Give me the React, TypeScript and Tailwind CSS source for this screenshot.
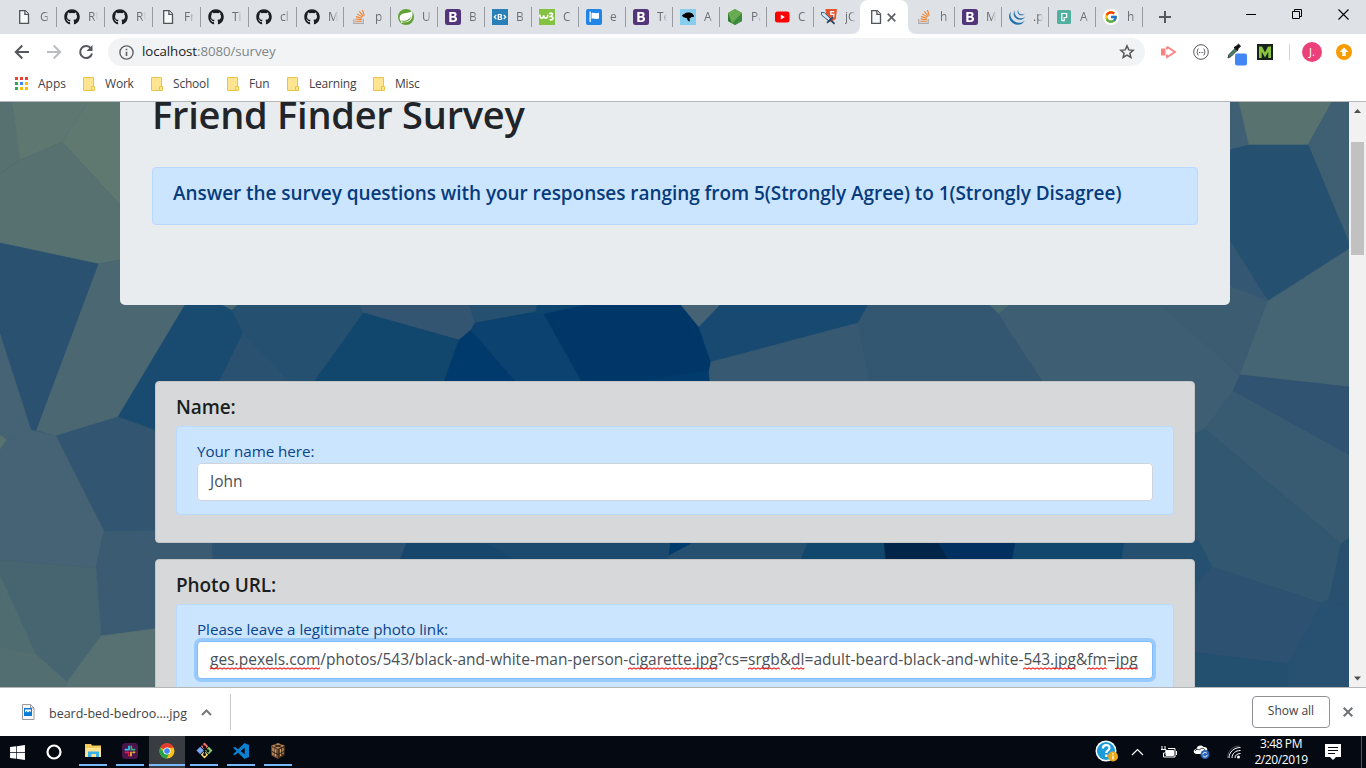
import React from "react";
import { FaGithub, FaWindows } from "react-icons/fa";
import { FcGoogle } from "react-icons/fc";
import { SiJquery } from "react-icons/si";

type Kind =
  | "page" | "github" | "stack" | "spring" | "boot" | "bb" | "w3" | "flag"
  | "duck" | "node" | "youtube" | "sword" | "jquery" | "p" | "google";

const TABS: { icon: Kind; label: string; w: string; active?: boolean }[] = [
  { icon: "page", label: "G", w: "w-12" },
  { icon: "github", label: "RU", w: "w-12" },
  { icon: "github", label: "RU", w: "w-12" },
  { icon: "page", label: "Fr", w: "w-12" },
  { icon: "github", label: "Ti", w: "w-12" },
  { icon: "github", label: "cl", w: "w-12" },
  { icon: "github", label: "M", w: "w-[47px]" },
  { icon: "stack", label: "p", w: "w-[47px]" },
  { icon: "spring", label: "U", w: "w-[47px]" },
  { icon: "boot", label: "B", w: "w-[47px]" },
  { icon: "bb", label: "B", w: "w-[47px]" },
  { icon: "w3", label: "C", w: "w-[47px]" },
  { icon: "flag", label: "e", w: "w-[47px]" },
  { icon: "boot", label: "Te", w: "w-[47px]" },
  { icon: "duck", label: "A", w: "w-[47px]" },
  { icon: "node", label: "Pa", w: "w-[47px]" },
  { icon: "youtube", label: "C", w: "w-[47px]" },
  { icon: "sword", label: "jQ", w: "w-[47px]" },
  { icon: "page", label: "", w: "w-12", active: true },
  { icon: "stack", label: "h", w: "w-[46px]" },
  { icon: "boot", label: "M", w: "w-[47px]" },
  { icon: "jquery", label: ".p", w: "w-[47px]" },
  { icon: "p", label: "A", w: "w-[47px]" },
  { icon: "google", label: "h", w: "w-[47px]" },
];

function Favicon({ kind }: { kind: Kind }) {
  const s = { width: 16, height: 16, viewBox: "0 0 16 16", className: "shrink-0" };
  switch (kind) {
    case "page":
      return (
        <svg {...s} fill="#f8f9fa" stroke="#505357" strokeWidth="1.3">
          <path d="M3.7 1.7h5.6l3.2 3.2v9.4H3.7z" />
          <path d="M8.9 1.7v3.6h3.6" />
        </svg>
      );
    case "github":
      return <FaGithub size={16} color="#1b1f23" className="shrink-0" />;
    case "stack":
      return (
        <svg {...s} fill="none">
          <path d="M2.8 10v4.3h9.4V10" stroke="#a9abae" strokeWidth="1.2" />
          <path d="M4.4 12.2h6.2M4.5 10l6.2.6M5 7.6l6 1.7M6.2 4.9l5.4 3.2M8.3 2.4l4.1 4.9M11.4 1l1.9 5.600" stroke="#f2802b" strokeWidth="1.1" />
        </svg>
      );
    case "spring":
      return (
        <svg {...s}>
          <circle cx="8" cy="8" r="8" fill="#5fa134" />
          <path d="M14 1.800c-2.200 2.800-6.600 1.600-9.900 3.300C.6 7.100 1.300 11 3.300 12.800c4.200 1.500 13.200.3 10.700-11z" fill="#fff" />
          <path d="M2.500 11.800c4.800.3 8.500-.7 10.700-4.600-.8 4.600-5.100 6.400-9.400 5.400z" fill="#5fa134" />
          <circle cx="3.700" cy="13.200" r=".8" fill="#fff" />
        </svg>
      );
    case "boot":
      return (
        <svg {...s}>
          <rect width="16" height="16" rx="2.5" fill="#533579" />
          <path fillRule="evenodd" fill="#fff" d="M4.3 3h4.6c3.2 0 3.5 3.7 1.3 4.6 3 1 2.4 5.4-1.4 5.4H4.3zM6.500 4.800v2.100h1.900c1.5 0 1.5-2.100 0-2.100zM6.500 8.700v2.500h2c1.800 0 1.800-2.500 0-2.500z" />
        </svg>
      );
    case "bb":
      return (
        <svg {...s}>
          <rect width="16" height="16" fill="#2980b9" />
          <path d="M4.300 6L2.200 8l2.100 2M11.700 6l2.100 2-2.100 2" stroke="#fff" strokeWidth="1.100" fill="none" />
          <path fillRule="evenodd" fill="#fff" d="M5.700 5h2.800c2 0 2 2.300.8 2.900 1.700.6 1.200 3.100-.8 3.100H5.700zM7 6v1.400h1c1 0 1-1.400 0-1.400zM7 8.400V10h1.200c1.200 0 1.200-1.600 0-1.600z" />
        </svg>
      );
    case "w3":
      return (
        <svg {...s}>
          <rect width="16" height="16" fill="#83c341" />
          <path d="M.8 5.500c0 4.500 3.600 5 3.900.8.300 4.200 3.900 3.700 4.200-.5M10.300 5.200c.8-1.700 4.200-1.300 2.900.9L11.600 7.500c4 .1 2.800 4.400-1 3.100" stroke="#fff" strokeWidth="1.600" fill="none" />
        </svg>
      );
    case "flag":
      return (
        <svg {...s}>
          <rect width="16" height="16" rx="2" fill="#2185e8" />
          <path d="M3.500 2.500h1.300V13H3.500zM5.500 4c2.500-1 4 1 7.500-.2v5.800c-3 1.200-5-.8-7.500.2z" fill="#fff" />
        </svg>
      );
    case "duck":
      return (
        <svg {...s}>
          <rect width="16" height="16" fill="#87cdee" />
          <path d="M2 6.200l2.500-1.400c1-1.500 6-2 7.800-.3l1.700 2.200c.3 1.600-1.300 1.300-2.500 1.300-.3 1-1.700 1-2 1.700l.5 2.500C8 12.700 7.300 11 7 9.300L3 8z" fill="#000" />
        </svg>
      );
    case "node":
      return (
        <svg {...s}>
          <path d="M8 0l7 4v8l-7 4-7-4V4z" fill="#539e43" />
          <path d="M8 0l7 4-10 10.300L1 12V4z" fill="#69ab51" />
          <path d="M1 4l4 10.300L1 12z" fill="#347b35" />
          <path d="M15 4v8l-7 4-3-1.700z" fill="#3e8b3e" />
        </svg>
      );
    case "youtube":
      return (
        <svg {...s}>
          <rect x="1" y="2.600" width="14.500" height="10.800" rx="2.500" fill="#f00" />
          <path d="M6.800 5.500l4 2.500-4 2.500z" fill="#fff" />
        </svg>
      );
    case "sword":
      return (
        <svg {...s}>
          <path d="M4.500 0H16l-1.200 10-5 3-4.500-2.500z" fill="#e4552d" />
          <path d="M13.300 2.600H9.700l.2 2.700h3l-.3 2.700-2.800.5" stroke="#fff" fill="none" strokeWidth="1.200" />
          <path d="M0 3.500l3.500.2 6.700 6.700-1.500 2L1 6.500z" fill="#d5ecfa" stroke="#25557e" strokeWidth=".9" />
          <path d="M6 13.800l6-6M10.300 11.700l3.200 3.200" stroke="#23486d" strokeWidth="1.800" />
        </svg>
      );
    case "jquery":
      return <SiJquery size={16} color="#2272ae" className="shrink-0" />;
    case "p":
      return (
        <svg {...s}>
          <rect x="1" y="1" width="14" height="14" rx="1.500" fill="#50af9f" />
          <path d="M5.800 12V4.500h4.900v4H8.200v3.200H5.800" stroke="#fff" strokeWidth="1.200" fill="none" />
        </svg>
      );
    case "google":
      return (
        <span className="flex size-4 shrink-0 items-center justify-center rounded-full bg-white">
          <FcGoogle size={14} />
        </span>
      );
  }
}

function TabStrip() {
  return (
    <div className="flex h-[34px] shrink-0 bg-[#dee1e6] pl-2">
      {TABS.map((t, i) =>
        t.active ? (
          <div key={i} className="relative flex h-[34px] w-12 shrink-0 items-center rounded-t-lg bg-white pl-2">
            <svg className="absolute bottom-0 -left-2" width="8" height="8"><path d="M8 0v8H0A8 8 0 0 0 8 0z" fill="#fff" /></svg>
            <svg className="absolute -right-2 bottom-0" width="8" height="8"><path d="M0 0v8h8A8 8 0 0 1 0 0z" fill="#fff" /></svg>
            <Favicon kind={t.icon} />
            <svg width="9" height="9" className="ml-[3px]" stroke="#5f6368" strokeWidth="1.700"><path d="M.7.700l7.600 7.600M8.300.700L.7 8.300" /></svg>
          </div>
        ) : (
          <div key={i} className={`relative flex shrink-0 items-center pl-2 ${t.w}`}>
            {i > 0 && i !== 19 && <span className="absolute top-[7px] left-0 h-5 w-px bg-[#989ba0]" />}
            <Favicon kind={t.icon} />
            <span className="ml-2 w-2.5 overflow-hidden text-xs whitespace-nowrap text-[#6b6e74] [mask-image:linear-gradient(to_right,black_50%,transparent)]">
              {t.label}
            </span>
          </div>
        )
      )}
      <div className="relative flex w-[46px] items-center justify-center">
        <span className="absolute top-[7px] left-0 h-5 w-px bg-[#989ba0]" />
        <svg width="12" height="12" stroke="#55585c" strokeWidth="2"><path d="M6 0v12M0 6h12" /></svg>
      </div>
      <div className="ml-auto flex h-7 items-center">
        <div className="flex w-[46px] justify-center"><svg width="10" height="10" stroke="#000"><path d="M0 5.500h10" /></svg></div>
        <div className="flex w-[46px] justify-center"><svg width="10" height="10" fill="none" stroke="#000"><path d="M.5 2.500h7v7h-7zM2.500 2.500v-2h7v7h-2" /></svg></div>
        <div className="flex w-[46px] justify-center"><svg width="11" height="11" stroke="#000" strokeWidth="1.100"><path d="M.5.500l10 10M10.500.500l-10 10" /></svg></div>
      </div>
    </div>
  );
}

function Toolbar() {
  return (
    <div className="flex h-9 shrink-0 items-center bg-white">
      <svg className="ml-[14px]" width="16" height="16" fill="none" stroke="#54575b" strokeWidth="2"><path d="M15 8H2M8.300 1.500L1.800 8l6.500 6.500" /></svg>
      <svg className="ml-4" width="16" height="16" fill="none" stroke="#babcbe" strokeWidth="2"><path d="M1 8h13M7.700 1.500L14.200 8l-6.500 6.500" /></svg>
      <svg className="ml-4" width="16" height="16" fill="none" stroke="#54575b" strokeWidth="2"><path d="M13 4.500A6 6 0 1 0 14 9.500" /><path d="M14.500 1v6h-6z" fill="#54575b" stroke="none" /></svg>
      <div className="ml-[14px] flex h-7 w-[1037px] items-center rounded-full bg-[#f1f3f4] pr-[10px] pl-[11px]">
        <svg width="15" height="15" fill="none" stroke="#5f6368" strokeWidth="1.400"><circle cx="7.500" cy="7.500" r="6.600" /><path d="M7.500 6.700v4.300M7.500 3.700v1.600" strokeWidth="1.600" /></svg>
        <span className="ml-2 text-[13.3px] tracking-[-0.08px] text-[#80868b]"><span className="text-[#202124]">localhost</span>:8080/survey</span>
        <svg className="ml-auto" width="16" height="16" fill="none" stroke="#55585c" strokeWidth="1.500"><path d="M8 1.900l1.800 4 4.400.4-3.300 2.900 1 4.300L8 11.200l-3.900 2.300 1-4.300-3.300-2.900 4.400-.4z" /></svg>
      </div>
      <svg className="ml-4" width="16" height="14" fill="none" stroke="#fb8080" strokeWidth="1.800"><path d="M6 1.800L14 7l-8 5.200V9.500M6 1.800V4.500" /><path d="M0 3.500h4.500v7H0z" fill="#fb8080" stroke="none" /></svg>
      <svg className="ml-4" width="16" height="16" fill="none" stroke="#54575b"><circle cx="8" cy="8" r="7.300" /><path d="M5.500 4.800c-1.600 0-.3 2.700-1.800 3.200 1.500.5.200 3.200 1.800 3.200M10.500 4.800c1.600 0 .3 2.700 1.800 3.200-1.500.5-.2 3.200-1.800 3.200" /><path d="M6 8.500h1M7.700 8.500h.8M9.300 8.500h1" /></svg>
      <svg className="mt-1 ml-[17px]" width="22" height="23"><path d="M2 15l1-3.500 6-6 2 2-6 6z" fill="#498063" stroke="#35443c" /><path d="M8 4.500l2-1 2.500-2.300 2 1.800-2.300 2.600-.8 2z" fill="#111" stroke="#111" /><rect x="9" y="10.500" width="12" height="12" rx="2" fill="#4285f4" /></svg>
      <svg className="ml-[9px]" width="16" height="16"><rect width="16" height="16" fill="#17201a" /><path d="M2 14V2.500h3l3 6 3-6h3V14h-2.700V7.800L8 13.500 4.700 7.800V14z" fill="#8cc63f" /></svg>
      <span className="ml-4 h-4 w-px bg-[#d1d3d6]" />
      <span className="ml-3 flex size-5 items-center justify-center rounded-full bg-[#ec407a] text-[11px] text-white">J.</span>
      <svg className="ml-[14px]" width="16" height="16"><circle cx="8" cy="8" r="8" fill="#f79c00" /><path d="M8 3.500l4.300 4.500H9.700v4H6.300V8H3.700z" fill="#fff" /></svg>
    </div>
  );
}

const BOOKMARKS = [
  { label: "Work", w: "w-[68px]" },
  { label: "School", w: "w-[76px]" },
  { label: "Fun", w: "w-[60px]" },
  { label: "Learning", w: "w-[86px]" },
  { label: "Misc", w: "w-[60px]" },
];
const DOTS = ["#ea4335", "#ea4335", "#ea4335", "#34a853", "#4285f4", "#fbbc05", "#34a853", "#fbbc05", "#fbbc05"];

function Bookmarks() {
  return (
    <div className="flex h-8 shrink-0 items-center border-b border-[#b5b6b8] bg-white pb-1 pl-[15px] text-xs text-[#3f4246]">
      <div className="flex w-[68px] items-center">
        <svg width="13" height="13">{DOTS.map((c, i) => <rect key={i} x={(i % 3) * 5} y={Math.floor(i / 3) * 5} width="3" height="3" fill={c} />)}</svg>
        <span className="ml-2.5">Apps</span>
      </div>
      {BOOKMARKS.map((b) => (
        <div key={b.label} className={`flex items-center ${b.w}`}>
          <svg width="12" height="14"><path d="M.5.500h10v9h1v4H.5z" fill="#ffe591" stroke="#e8c546" /><path d="M8.500 13v-3.500h2" fill="none" stroke="#e8c546" /></svg>
          <span className="ml-2.5 tracking-[-0.2px]">{b.label}</span>
        </div>
      ))}
    </div>
  );
}

const SHARDS: [string, string][] = [
  ["#56716f", "0,102 12,102 20,160 0,174"],
  ["#5e7771", "12,102 88,102 62,142 20,160"],
  ["#5f7870", "88,102 125,102 125,210 62,142"],
  ["#577171", "0,174 20,160 62,142 125,210 125,259 98,264 0,243"],
  ["#4a6772", "98,264 125,259 125,300 190,300 118,417 56,436 36,430"],
  ["#2a5170", "0,243 98,264 36,430 31,430 0,334"],
  ["#456374", "0,334 31,430 7,440 0,435"],
  ["#57726f", "0,435 7,440 0,450"],
  ["#194a6f", "188,300 220,305 232,310 243,333 220,381 160,440 118,417"],
  ["#4a6772", "215,300 246,300 232,310"],
  ["#325671", "56,436 118,417 160,432 160,530 104,531"],
  ["#456374", "7,440 31,430 56,436 104,531 96,568 0,560 0,450"],
  ["#3b5b72", "104,531 216,530 218,562 160,628 101,636 96,568"],
  ["#466571", "0,560 96,568 101,636 67,682 36,654 0,575"],
  ["#4f6c71", "0,575 36,654 0,647"],
  ["#536e71", "0,647 36,654 67,682 67,687 0,687"],
  ["#577172", "67,682 101,636 160,628 160,687 67,687"],
  ["#25506f", "244,300 358,300 363.5,313 314,382 290,382 243,333 232,310"],
  ["#2a5170", "243,333 291,382 219,382"],
  ["#335571", "358,300 468,300 475,323 471,330 459,340 363.5,313"],
  ["#11466d", "363.5,313 459,340 444,382 314,382"],
  ["#25506f", "468,300 538,300 536,312 475,323"],
  ["#003a6c", "459,340 471,330 516,382 444,382"],
  ["#0c426f", "471,330 475,323 536,312 544,314 582,382 516,382"],
  ["#0e456e", "538,300 620,300 544,314 536,312"],
  ["#003769", "620,298 677,300 699,327 711,362 709,372 710,382 582,382 544,314"],
  ["#023c6c", "640,381 709,371 710,382"],
  ["#456374", "677,300 725,300 699,327"],
  ["#184a71", "725,300 871,300 858,323 711,362 699,327"],
  ["#375a72", "711,362 858,323 870,382 710,382 709,372"],
  ["#335671", "871,300 985,300 999,314 1010,332 1043,382 870,382 858,323"],
  ["#486a70", "985,300 1015,300 999,314"],
  ["#3e5f73", "1015,300 1155,300 1240,375 1233,391 1205,429 1190,436 1190,382 1043,382 1010,332 999,314"],
  ["#3f6074", "1225,102 1239,102 1249,145 1225,151"],
  ["#587270", "1239,102 1332,102 1308,145 1249,145"],
  ["#3f5f73", "1332,102 1349,102 1349,243 1308,145"],
  ["#265070", "1225,151 1249,145 1308,145 1349,243 1349,249 1268,301 1225,233"],
  ["#345873", "1225,233 1268,301 1225,284"],
  ["#3c5c72", "1155,300 1225,284 1268,301 1240,375"],
  ["#466574", "1268,301 1349,249 1349,387 1240,375"],
  ["#2f5371", "1240,375 1349,387 1349,455 1233,391"],
  ["#395b72", "1233,391 1349,455 1349,538 1341,544 1205,430"],
  ["#325771", "1190,436 1205,429 1341,544 1329,601 1322,603 1212,567 1190,520"],
  ["#29516f", "1349,538 1341,544 1329,600 1349,608"],
  ["#26506f", "1122,540 1198,540 1212,567 1190,592 1122,562"],
  ["#2d5271", "1190,592 1212,567 1322,603 1288,664 1190,652"],
  ["#245070", "1190,652 1288,664 1288,687 1190,687"],
  ["#285171", "1322,603 1329,600 1349,608 1349,687 1288,687 1288,664"],
  ["#2b5270", "212,540 408,540 399,562 213,562"],
  ["#17466d", "408,540 672,540 670,562 399,562"],
  ["#1b4a6e", "480,540 672,540 670,562 520,562"],
  ["#265070", "672,540 809,540 800,562 668,562"],
  ["#003b6d", "671,540 697,540 669,555"],
  ["#11466d", "809,540 884,540 886,562 800,562"],
  ["#002548", "884,540 937,540 950,562 886,562"],
  ["#003060", "937,540 1016,540 1012,562 950,562"],
  ["#11466d", "1016,540 1124,540 1121,562 1012,562"],
];

function Wavy({ id, children }: { id: string; children: React.ReactNode }) {
  return (
    <span className="relative inline-block">
      {children}
      <svg className="absolute bottom-[2px] left-0 w-full" height="3">
        <pattern id={id} width="4" height="3" patternUnits="userSpaceOnUse">
          <path d="M-1 2.800L2 .8l3 2" fill="none" stroke="#f01414" strokeWidth="1.100" />
        </pattern>
        <rect width="100%" height="3" fill={`url(#${id})`} />
      </svg>
    </span>
  );
}

function Field({ title, label, focused, children }: { title: string; label: string; focused?: boolean; children: React.ReactNode }) {
  return (
    <section className="h-[162px] rounded-[4px] border border-[#c3c5c7] bg-[#d6d8d9] px-5 pt-[13px]">
      <h5 className="text-[19px] leading-6 font-semibold tracking-[-0.1px] text-[#1b1e21]">{title}</h5>
      <div className="mt-[7px] h-[89px] rounded-[4px] border border-[#b8daff] bg-[#cce5ff] px-5 pt-3">
        <label className="block h-6 text-[15.2px] leading-6 tracking-[-0.03px] text-[#0a4389]">{label}</label>
        <div className={`flex h-[38px] items-center rounded-[4px] border bg-white px-3 text-[15.5px] whitespace-nowrap text-[#495057] ${focused ? "border-[#80bdff] ring-[3px] ring-[#99caff]" : "border-[#ced4da]"}`}>
          {children}
        </div>
      </div>
    </section>
  );
}

function Page() {
  return (
    <main className="flex h-[585px] shrink-0 overflow-hidden">
      <div className="relative w-[1349px] overflow-hidden">
        <svg className="absolute inset-0" width="1349" height="585" viewBox="0 102 1349 585">
          <rect y="102" width="1349" height="585" fill="#2b5270" />
          {SHARDS.map(([fill, points], i) => <polygon key={i} points={points} fill={fill} stroke={fill} strokeWidth=".6" />)}
        </svg>
        <div className="relative ml-[120px] w-[1110px]">
          <header className="flow-root h-[203px] rounded-b-[5px] bg-[#e9ecef] px-8">
            <h1 className="-mt-3 h-[77px] text-[38px] leading-[48px] font-semibold tracking-[-0.25px] text-[#212529]">Friend Finder Survey</h1>
            <div className="h-[58px] rounded-[4px] border border-[#b8daff] bg-[#cce5ff] px-5 pt-[13px]">
              <h5 className="text-[19px] leading-6 font-semibold tracking-[-0.055px] whitespace-nowrap text-[#063b7c]">Answer the survey questions with your responses ranging from 5(Strongly Agree) to 1(Strongly Disagree)</h5>
            </div>
          </header>
          <div className="mt-[76px] ml-[35px] flex w-[1040px] flex-col gap-4">
            <Field title="Name:" label="Your name here:"><span>John</span></Field>
            <Field title="Photo URL:" label="Please leave a legitimate photo link:" focused>
              <span className="tracking-[0.02px]">
                <Wavy id="w1">ges.pexels.com</Wavy>/photos/543/black-and-white-man-person-<Wavy id="w2">cigarette.jpg</Wavy>?cs=<Wavy id="w3">srgb</Wavy>&amp;<Wavy id="w4">dl</Wavy>=adult-beard-black-and-white-<Wavy id="w5">543.jpg</Wavy>&amp;<Wavy id="w6">fm</Wavy>=<Wavy id="w7">jpg</Wavy>
              </span>
            </Field>
          </div>
        </div>
      </div>
      <div className="flex w-[17px] flex-col items-center bg-[#f1f1f1]">
        <svg width="17" height="17"><path d="M5 11h7L8.500 7z" fill="#505050" /></svg>
        <div className="mt-[23px] h-[113px] w-[13px] bg-[#c1c1c1]" />
        <svg className="mt-auto" width="17" height="17"><path d="M5 6.500h7l-3.500 4z" fill="#505050" /></svg>
      </div>
    </main>
  );
}

function Downloads() {
  return (
    <div className="flex h-[49px] shrink-0 items-center border-t border-[#b5b6b8] bg-white text-[#3f4246]">
      <svg className="ml-[22px]" width="13" height="16"><path d="M.5.500h8l3.500 3.500v11.500H.5z" fill="#f8f8f8" stroke="#9a9a9a" /><path d="M8.500.500v3.500H12" fill="none" stroke="#9a9a9a" /><path d="M2 4h8v8H2z" fill="#0b7bd8" /><path d="M3 8.500V5.500h6V8L7.500 7 6 8.500 4.500 7z" fill="#fff" /></svg>
      <span className="mt-[5px] ml-[14px] w-[152px] text-[12.5px] whitespace-nowrap">beard-bed-bedroo....jpg</span>
      <svg width="11" height="7" fill="none" stroke="#777" strokeWidth="2"><path d="M1 6l4.500-4.500L10 6" /></svg>
      <span className="ml-[18px] h-9 w-px bg-[#c8c9ca]" />
      <button className="ml-auto h-8 w-[78px] rounded-[4px] border border-[#8f9194] pb-[2px] text-xs">Show all</button>
      <svg className="mr-[13px] ml-[13px]" width="10" height="10" stroke="#6f7275" strokeWidth="2"><path d="M.7.700l8.600 8.600M9.300.700L.7 9.300" /></svg>
    </div>
  );
}

function Explorer() {
  return <svg width="17" height="16"><path d="M0 1h6l1 1.500h9V14H0z" fill="#f6cc59" /><path d="M1 5h15v9H0z" fill="#ffe391" /><path d="M3 14V8.500h11V14h-3v-3H6.500v3z" fill="#38b3ea" /></svg>;
}
function Slack() {
  return (
    <svg width="16" height="16" fill="none" strokeWidth="1.800" strokeLinecap="round"><rect width="16" height="16" rx="3.500" fill="#4a154b" /><path d="M7 3.500v3.200M3.500 6.700h1.800" stroke="#36c5f0" /><path d="M9.300 6.700h3.200M9.300 3.500v1.600" stroke="#2eb67d" /><path d="M9 9.500v3M11.200 9.300h1.300" stroke="#ecb22e" /><path d="M3.500 9.300h3.200M6.700 11.500v1" stroke="#e01e5a" /></svg>
  );
}
function Chrome() {
  return (
    <svg width="16" height="16" viewBox="0 0 16 16"><circle cx="8" cy="8" r="7.500" fill="#fbc116" /><path d="M8 8L1.200 4.500A7.500 7.500 0 0 1 14.700 4.700H8z" fill="#e33b2e" /><path d="M1.200 4.500A7.500 7.500 0 0 0 7.500 15.500L11 9.500 8 8 5 9.500z" fill="#2ba24c" /><circle cx="8" cy="8" r="3.600" fill="#fff" /><circle cx="8" cy="8" r="2.800" fill="#4285f4" /></svg>
  );
}
function Git() {
  return (
    <svg width="17" height="17" viewBox="0 0 17 17"><path d="M8.500.500l3.700 3.700-3.700 3.700-3.700-3.700z" fill="#f2706b" /><path d="M4.200 4.800l3.700 3.700-3.700 3.700L.5 8.500z" fill="#79a9f5" /><path d="M12.800 4.800l3.700 3.700-3.700 3.700-3.700-3.700z" fill="#84cf75" /><path d="M8.500 9.100l3.700 3.700-3.700 3.700-3.700-3.700z" fill="#f7d878" /><path d="M6 2l2.500 3v8M8.500 5l3.500 4" stroke="#111" strokeWidth="1.300" fill="none" /><circle cx="8.500" cy="5" r="1.500" fill="#111" /><circle cx="8.500" cy="12.500" r="1.500" fill="#111" /><circle cx="12" cy="9" r="1.400" fill="#111" /></svg>
  );
}
function Code() {
  return <svg width="16" height="16"><path fillRule="evenodd" d="M11.500 0L16 1.900v12.200L11.500 16 5 9.700 1.800 12.200 0 11.200 3.500 8 0 4.800l1.800-1L5 6.300zM11.700 4.800L7.500 8l4.200 3.200z" fill="#0b7fd0" /></svg>;
}
function Craft() {
  return (
    <svg width="16" height="16"><path d="M8 0l7 2.800L8 6 1 2.800z" fill="#b58655" /><path d="M1 2.800L8 6v10l-6.500-3.500z" fill="#745034" /><path d="M15 2.800L8 6v10l6.500-3.500z" fill="#49301f" /><path d="M3 5v7M5.500 6.500v7M10.500 6v7M13 5v6" stroke="#c99b68" strokeWidth="1.300" /><path d="M2 8.500l6 3 6-3M4.500 1.700l7 2.600M11.500 1.700l-7 2.600" stroke="#291c14" fill="none" /></svg>
  );
}

const APPS = [
  { icon: <Explorer />, box: "w-7" },
  { icon: <Slack />, box: "w-7 ml-[9px]" },
  { icon: <Chrome />, box: "w-9 ml-[5px] bg-[#393c41]" },
  { icon: <Git />, box: "w-7 ml-[5px]" },
  { icon: <Code />, box: "w-7 ml-[9px]" },
  { icon: <Craft />, box: "w-7 ml-[9px]" },
];

function Taskbar() {
  return (
    <footer className="flex h-8 shrink-0 items-center bg-[#050a12] text-white">
      <FaWindows size={17} className="ml-[9px]" />
      <svg className="ml-5" width="16" height="16"><circle cx="8" cy="8" r="6.500" fill="none" stroke="#fff" strokeWidth="2.200" /></svg>
      <div className="ml-[17px] flex h-8">
        {APPS.map((a, i) => (
          <div key={i} className={`flex h-8 flex-col items-center justify-between ${a.box}`}>
            <div className="flex h-7 items-center pt-px">{a.icon}</div>
            <span className="mb-[2px] h-[2px] w-full bg-[#76b9ff]" />
          </div>
        ))}
      </div>
      <svg className="ml-auto" width="24" height="24"><circle cx="11" cy="11" r="10.500" fill="#fff" /><circle cx="11" cy="11" r="9" fill="#1b9cd8" /><path d="M7.800 8.500c0-4.500 6.700-4.500 6.700-.6 0 2.500-3.200 2.300-3.200 5M11.300 14.500v2.500" stroke="#fff" strokeWidth="2.200" fill="none" /><circle cx="18" cy="16.500" r="5" fill="#eda71b" /><path d="M18 15.500v4M18 13v1.500" stroke="#fff" strokeWidth="1.300" /></svg>
      <svg className="ml-[12px]" width="13" height="8" fill="none" stroke="#fff" strokeWidth="1.200"><path d="M1 7l5.500-5.500L12 7" /></svg>
      <svg className="ml-4" width="18" height="14" fill="none" stroke="#fff"><path d="M2 1v3M5 1v3M1 4.500h5v1.500c0 2-1.500 2-2.500 2v4H15V3.500H8" /><path d="M6 5.500h7.500v5H6z" fill="#fff" /><path d="M16.500 6v4" /></svg>
      <svg className="ml-[15px]" width="18" height="16"><path d="M4 10C-.5 10 0 5 3.500 5 4 1 9 .5 10.500 3c3-.5 4.500 2 3.500 4l1 3z" fill="#fff" /><path d="M2 7c1-2 3-2 4.500-1C8 3.500 11 4 12 6" stroke="#050a12" fill="none" strokeWidth=".8" /><circle cx="12" cy="10.500" r="4.500" fill="#2c64b5" /><path d="M9.800 10.500a2.200 2.200 0 0 1 4-1.200M14.200 11a2.200 2.200 0 0 1-4 .9" stroke="#fff" fill="none" /></svg>
      <svg className="ml-4" width="15" height="15" fill="none" stroke="#fff"><path d="M2 13C2 7 7 2.500 13.500 2.500M5 13c0-4.500 3.500-7.500 8.500-7.500M8 13c0-2.500 2-4.500 5.500-4.500" /><circle cx="11.500" cy="12" r="1.500" fill="#fff" stroke="none" /><path d="M.5 13C.5 6 5.500 1 12.500 1" stroke="#687079" strokeWidth=".7" /></svg>
      <div className="ml-[9px] w-[60px] text-center text-xs leading-[16px] tracking-[-0.4px] whitespace-nowrap">3:48 PM<br />2/20/2019</div>
      <svg className="ml-[14px]" width="16" height="16"><path d="M0 0h16v13h-5l-3 3-3-3H0z" fill="#fff" /><path d="M3 3.500h10M3 6.500h10M3 9.500h7" stroke="#050a12" strokeWidth="1.200" /></svg>
      <span className="mr-1 ml-5 h-8 w-px bg-[#50555c]" />
    </footer>
  );
}

export default function App() {
  return (
    <div className="flex h-[768px] w-[1366px] flex-col overflow-hidden bg-white font-['Open_Sans','Noto_Sans',sans-serif]">
      <TabStrip />
      <Toolbar />
      <Bookmarks />
      <Page />
      <Downloads />
      <Taskbar />
    </div>
  );
}
